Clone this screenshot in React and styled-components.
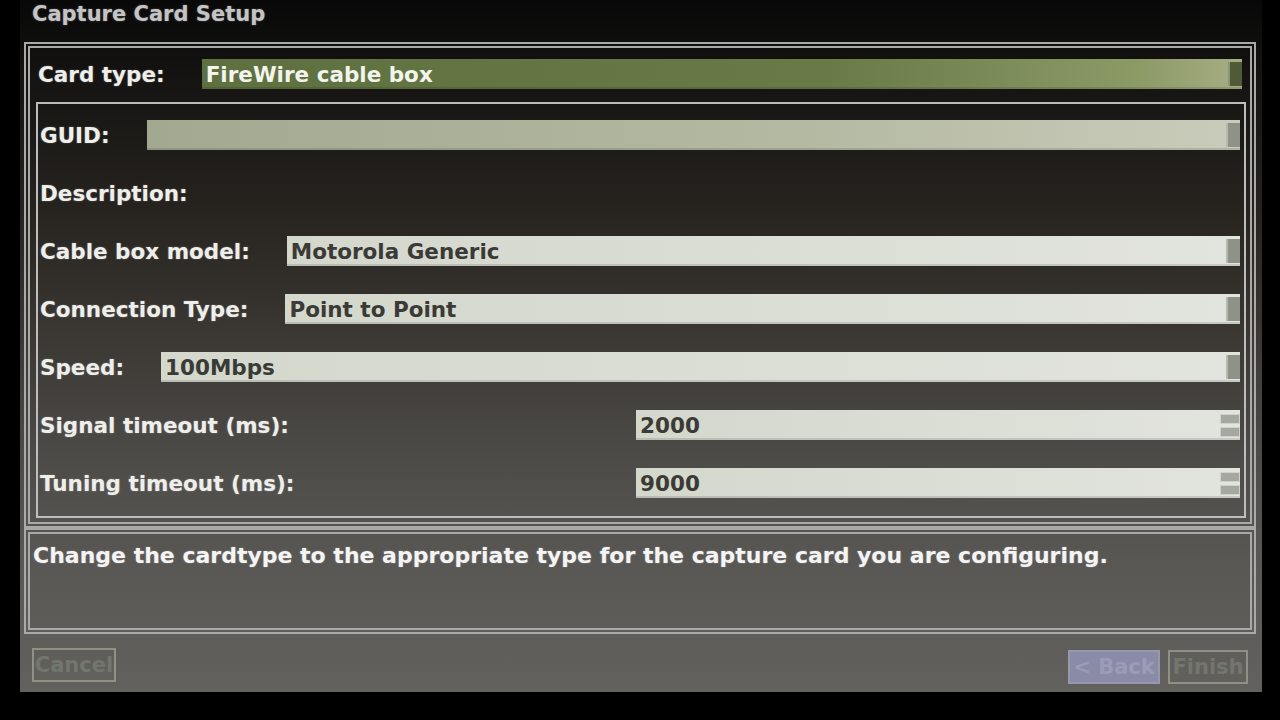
import React from "react";
import styled, { createGlobalStyle } from "styled-components";

const GlobalStyle = createGlobalStyle`
  html, body {
    margin: 0;
    padding: 0;
    background: #000;
  }
  body {
    width: 1280px;
    height: 720px;
    overflow: hidden;
    font-family: "DejaVu Sans", "Liberation Sans", sans-serif;
  }
`;

const Screen = styled.div`
  width: 1242px;
  height: 692px;
  margin-left: 20px;
  padding: 0 6px 0 4px;
  box-sizing: border-box;
  display: flex;
  flex-direction: column;
  background: linear-gradient(
    to bottom,
    #080808 0px,
    #151412 80px,
    #25221e 200px,
    #3a3733 330px,
    #4c4a46 450px,
    #585754 560px,
    #62615e 692px
  );
`;

const Title = styled.div`
  height: 42px;
  padding-left: 8px;
  font-size: 21px;
  font-weight: bold;
  line-height: 28px;
  color: #c4c4c4;
  text-shadow: 0 0 2px rgba(255, 255, 255, 0.35);
`;

const Frame = styled.div`
  border: 6px double #a9a9a9;
  box-sizing: border-box;
  height: ${(p) => p.$height}px;
`;

const FormFrame = styled(Frame)`
  display: flex;
  flex-direction: column;
  padding: 11px 8px 0 8px;
  gap: 13px;
`;

const InnerBox = styled.div`
  margin: 0 -4px 0 -2px;
  border: 2px solid #bdbdbd;
  height: 416px;
  box-sizing: border-box;
  padding: 16px 4px 0 2px;
  display: flex;
  flex-direction: column;
  gap: 28px;
`;

const Row = styled.div`
  display: flex;
  align-items: center;
  height: 30px;
  gap: ${(p) => (p.$spin ? 0 : 37)}px;
`;

const Label = styled.div`
  font-size: 21.5px;
  font-weight: bold;
  color: #eeeeea;
  white-space: nowrap;
  text-shadow: 0 0 2px rgba(255, 255, 255, 0.3);
  flex: ${(p) => (p.$grow ? 1 : "none")};
`;

const Field = styled.div`
  position: relative;
  flex: ${(p) => (p.$width ? "none" : 1)};
  width: ${(p) => (p.$width ? `${p.$width}px` : "auto")};
  height: 30px;
  box-sizing: border-box;
  padding: 0 24px 0 4px;
  display: flex;
  align-items: center;
  font-size: 21.5px;
  font-weight: bold;
  white-space: nowrap;
  color: ${(p) => (p.$tone === "green" ? "#f4f4ee" : "#3a3a36")};
  background: ${(p) =>
    p.$tone === "green"
      ? "linear-gradient(to right, #5f7040, #687a46 60%, #8c9a66 90%, #a6ae84)"
      : p.$tone === "guid"
      ? "linear-gradient(to right, #a3a991, #b4b9a2 60%, #c9ccba)"
      : "linear-gradient(to right, #d4d7cc, #dcdfd6 60%, #e2e4de)"};
  box-shadow: inset 0 -2px 0 rgba(0, 0, 0, 0.12);
`;

const Nub = styled.div`
  position: absolute;
  right: 0;
  top: 3px;
  bottom: 3px;
  width: 12px;
  background: ${(p) => (p.$tone === "green" ? "#4f5a36" : "#8f9287")};
  border-left: 2px solid rgba(255, 255, 255, 0.35);
`;

const Spin = styled.div`
  position: absolute;
  right: 0;
  top: 4px;
  bottom: 3px;
  width: 20px;
  display: flex;
  flex-direction: column;
  gap: 3px;
`;

const SpinPart = styled.div`
  flex: 1;
  background: #a5a7a0;
  border: 1px solid #cfd1ca;
`;

const HelpFrame = styled(Frame)`
  padding: 9px 3px;
  font-size: 22px;
  font-weight: bold;
  color: #f4f4f4;
  line-height: 26px;
  white-space: nowrap;
  text-shadow: 0 0 2px rgba(255, 255, 255, 0.3);
`;

const ButtonBar = styled.div`
  flex: 1;
  display: flex;
  align-items: center;
  padding: 4px 8px 0 8px;
  gap: 8px;
`;

const Spacer = styled.div`
  flex: 1;
`;

const Button = styled.div`
  height: 34px;
  box-sizing: border-box;
  display: flex;
  align-items: center;
  justify-content: center;
  white-space: nowrap;
  width: ${(p) => p.$width}px;
  font-size: 21px;
  font-weight: bold;
  color: ${(p) => (p.$active ? "#9c9cb6" : "#73766c")};
  background: ${(p) => (p.$active ? "#8a8ba6" : "transparent")};
  border: 2px solid ${(p) => (p.$active ? "#9797b0" : "#8e9184")};
  margin-top: ${(p) => p.$offset || 0}px;
`;

const fields = [
  { label: "GUID:", value: "", tone: "guid" },
  { label: "Description:", none: true },
  { label: "Cable box model:", value: "Motorola Generic" },
  { label: "Connection Type:", value: "Point to Point" },
  { label: "Speed:", value: "100Mbps" },
  { label: "Signal timeout (ms):", value: "2000", spin: true },
  { label: "Tuning timeout (ms):", value: "9000", spin: true },
];

export default function App() {
  return (
    <>
      <GlobalStyle />
      <Screen>
        <Title>Capture Card Setup</Title>
        <FormFrame $height={486}>
          <Row>
            <Label>Card type:</Label>
            <Field $tone="green">
              FireWire cable box
              <Nub $tone="green" />
            </Field>
          </Row>
          <InnerBox>
            {fields.map((f) => (
              <Row key={f.label} $spin={f.spin}>
                <Label $grow={f.spin}>{f.label}</Label>
                {f.none ? null : f.spin ? (
                  <Field $width={604}>
                    {f.value}
                    <Spin>
                      <SpinPart />
                      <SpinPart />
                    </Spin>
                  </Field>
                ) : (
                  <Field $tone={f.tone}>
                    {f.value}
                    <Nub />
                  </Field>
                )}
              </Row>
            ))}
          </InnerBox>
        </FormFrame>
        <HelpFrame $height={106}>
          Change the cardtype to the appropriate type for the capture card you
          are configuring.
        </HelpFrame>
        <ButtonBar>
          <Button $width={84}>Cancel</Button>
          <Spacer />
          <Button $width={92} $active $offset={4}>
            &lt; Back
          </Button>
          <Button $width={80} $offset={4}>
            Finish
          </Button>
        </ButtonBar>
      </Screen>
    </>
  );
}
